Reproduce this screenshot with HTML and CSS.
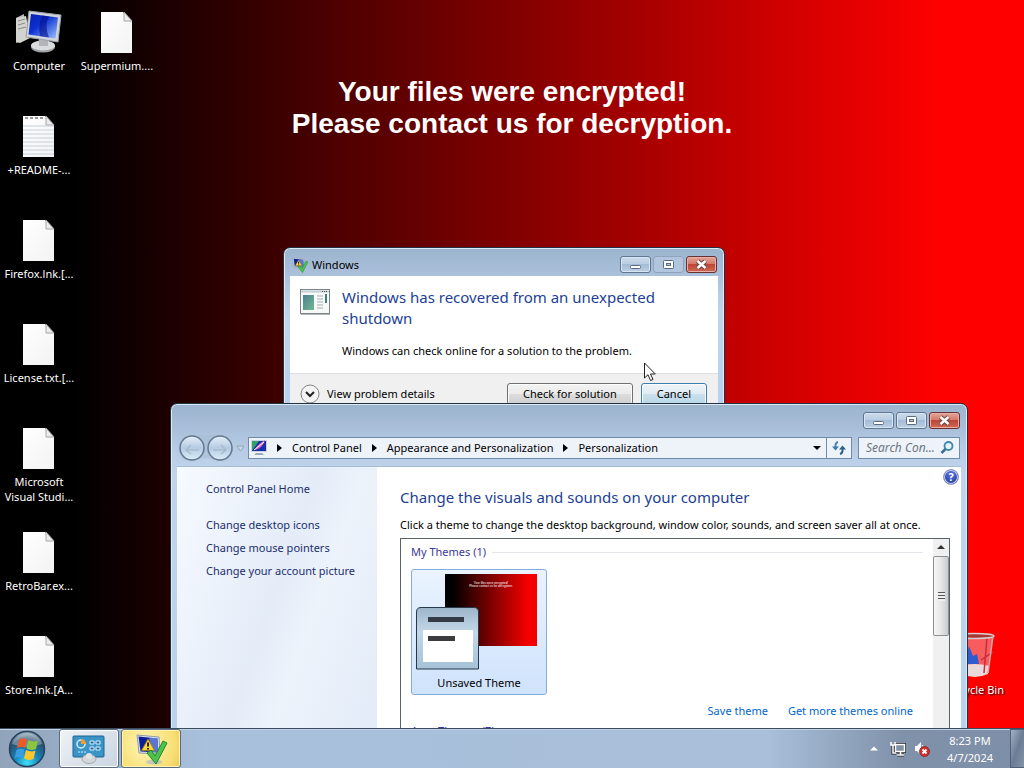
FILE: index.html
```html
<!DOCTYPE html>
<html lang="en">
<head>
    <meta charset="UTF-8">
    <meta name="viewport" content="width=device-width, initial-scale=1.0">
    <title>Desktop</title>
    <link rel="stylesheet" href="styles.css">
</head>
<body>

    <!-- shared icons -->
    <svg class="sprite" aria-hidden="true">
        <defs>
            <linearGradient id="paper" x1="0" y1="0" x2="1" y2="1">
                <stop offset="0" stop-color="#ffffff"/>
                <stop offset="1" stop-color="#f3f3f3"/>
            </linearGradient>
            <linearGradient id="screen" x1="0" y1="0" x2="1" y2="1">
                <stop offset="0" stop-color="#0a1fb0"/>
                <stop offset="0.4" stop-color="#0c2fd0"/>
                <stop offset="1" stop-color="#9cc4ff"/>
            </linearGradient>
            <linearGradient id="glassBtn" x1="0" y1="0" x2="0" y2="1">
                <stop offset="0" stop-color="#e6eff8"/>
                <stop offset="0.5" stop-color="#b4cbe2"/>
                <stop offset="1" stop-color="#dcecf9"/>
            </linearGradient>
            <symbol id="file" viewBox="0 0 48 48">
                <path d="M8 4H30L39 13V45H8Z" fill="url(#paper)"/>
                <path d="M31 4V13H39Z" fill="#ececec" stroke="#a5a5a5" stroke-width="1"/>
            </symbol>
            <symbol id="flag" viewBox="0 0 16 16">
                <rect x="0" y="0" width="16" height="12" rx="1" fill="#c9d3df"/>
                <rect x="1" y="1" width="14" height="10" fill="#1a2da8"/>
                <path d="M1 1H8L3 8L1 11Z" fill="#2fa36a"/>
                <path d="M4 10C5 6 9 3 14 0C13 5 9 9 4 10Z" fill="#c95fc0"/>
                <path d="M3 10L13 2" stroke="#fff" stroke-width="1"/>
                <path d="M5 13H11L13 15H3Z" fill="#9aa7b5"/>
            </symbol>
            <symbol id="solution" viewBox="0 0 32 32">
                <ellipse cx="19" cy="29" rx="8" ry="2.500" fill="#b9bfc6" opacity="0.8"/>
                <path d="M2 2L24 4L25 21L4 20Z" fill="#dfe5ee" stroke="#8e99a8"/>
                <path d="M3.500 3.500L22.500 5.500L23.500 19.500L5.500 18.500Z" fill="#0c1f96"/>
                <path d="M14 4.500L22.500 5.500L23.500 19.500L17 19Z" fill="#7f9ae8" opacity="0.7"/>
                <path d="M13 6L19.500 17.500H6.500Z" fill="#fbd53a" stroke="#a57a00" stroke-width="0.700"/>
                <path d="M13 9.500V13.500M13 15V16.500" stroke="#111" stroke-width="1.800"/>
                <path d="M12 20L16 17L20 23L28 8L32 10L21 31Z" fill="#4dc24d" stroke="#1f8a2c"/>
            </symbol>
            <symbol id="min" viewBox="0 0 29 15">
                <rect x="9.500" y="8.500" width="10" height="3" rx="1" fill="#fff" stroke="#5b6b80"/>
            </symbol>
            <symbol id="max" viewBox="0 0 29 15">
                <rect x="9.500" y="3.500" width="10" height="8" rx="1" fill="#fff" stroke="#5b6b80"/>
                <rect x="12.500" y="6.500" width="4" height="2" fill="#b5c8de" stroke="#5b6b80"/>
            </symbol>
            <symbol id="close" viewBox="0 0 29 15">
                <path d="M10.500 4L18.500 11M18.500 4L10.500 11" stroke="#6a4440" stroke-width="4.500"/>
                <path d="M10.500 4L18.500 11M18.500 4L10.500 11" stroke="#fff" stroke-width="2.500"/>
            </symbol>
        </defs>
    </svg>

    <main class="desktop">
        <h1 class="notice">Your files were encrypted!<br>Please contact us for decryption.</h1>

        <ul class="icons">
            <li class="icon">
                <svg class="icon-img" viewBox="0 0 48 48">
                    <path d="M1 10L9 6V32L1 35Z" fill="#b9bbb8"/>
                    <path d="M1 10L11 8L15 30L5 35L1 34Z" fill="#d3d3cf"/>
                    <path d="M3 13L10 11M3 17L10 15M3 21L11 19" stroke="#888" stroke-width="1"/>
                    <ellipse cx="28" cy="39" rx="12" ry="5.500" fill="#9da1a4"/>
                    <ellipse cx="28" cy="37.500" rx="12" ry="5" fill="#d9dcdd"/>
                    <path d="M24 30H33V38H24Z" fill="#b2b6b8"/>
                    <path d="M14 3L46 7L43 34L11 29Z" fill="#d0d4da" stroke="#9ba1a8"/>
                    <path d="M16 6L43 9.500L40.500 30.500L13.500 26.500Z" fill="url(#screen)"/>
                    <path d="M27 7.500L34 8.500Q29 17 34 29.500L25 28Q23 18 27 7.500Z" fill="#05108c" opacity="0.6"/>
                </svg>
                <span>Computer</span>
            </li>
            <li class="icon">
                <svg class="icon-img" viewBox="0 0 48 48">
                    <use href="#file"/>
                    <path d="M8 14H39M8 18H39M8 22H39M8 26H39M8 30H39M8 34H39M8 38H39M8 42H39" stroke="#c6d0de" stroke-width="1"/>
                    <path d="M10 6h3M15 6h3M20 6h3M25 6h3" stroke="#999" stroke-width="2"/>
                </svg>
                <span>+README-...</span>
            </li>
            <li class="icon">
                <svg class="icon-img"><use href="#file"/></svg>
                <span>Firefox.lnk.[...</span>
            </li>
            <li class="icon">
                <svg class="icon-img"><use href="#file"/></svg>
                <span>License.txt.[...</span>
            </li>
            <li class="icon">
                <svg class="icon-img"><use href="#file"/></svg>
                <span>Microsoft<br>Visual Studi...</span>
            </li>
            <li class="icon">
                <svg class="icon-img"><use href="#file"/></svg>
                <span>RetroBar.ex...</span>
            </li>
            <li class="icon">
                <svg class="icon-img"><use href="#file"/></svg>
                <span>Store.lnk.[A...</span>
            </li>
            <li class="icon">
                <svg class="icon-img"><use href="#file"/></svg>
                <span>Supermium....</span>
            </li>
            <li class="icon recycle">
                <svg class="icon-img" viewBox="0 0 48 48">
                    <path d="M4 3H42L37 41Q24 48 10 41Z" fill="#f4c9cf" opacity="0.45"/>
                    <path d="M9 34Q24 30 38 34L37 42Q24 48 10 42Z" fill="#e8eef0" opacity="0.85"/>
                    <path d="M14 32L18 14L22 24L26 22L28 32Z" fill="#2d5bd0"/>
                    <path d="M36 5L33 41M42 20L30 28" stroke="#c03040" stroke-width="1.500" fill="none"/>
                    <ellipse cx="23" cy="4" rx="20" ry="2.500" fill="#a33" stroke="#d6cfcf" stroke-width="1.500"/>
                    <path d="M42 4L37 41" stroke="#d7a7ab" stroke-width="1.500"/>
                </svg>
                <span>Recycle Bin</span>
            </li>
        </ul>

        <!-- shutdown dialog -->
        <section class="window dialog">
            <header class="titlebar">
                <svg class="title-icon"><use href="#solution"/></svg>
                <span class="title">Windows</span>
                <div class="controls">
                    <button type="button" aria-label="Minimize"><svg><use href="#min"/></svg></button>
                    <button type="button" class="dim" aria-label="Maximize"><svg><use href="#max"/></svg></button>
                    <button type="button" class="close" aria-label="Close"><svg><use href="#close"/></svg></button>
                </div>
            </header>
            <div class="client">
                <div class="dialog-body">
                    <svg class="dialog-icon" viewBox="0 0 30 26">
                        <defs>
                            <linearGradient id="app" x1="0" y1="0" x2="1" y2="1">
                                <stop offset="0" stop-color="#4f7f8c"/>
                                <stop offset="1" stop-color="#6fb893"/>
                            </linearGradient>
                        </defs>
                        <rect x="0.500" y="0.500" width="29" height="24" fill="#f7f8f8" stroke="#7d8488"/>
                        <path d="M1 2.500H29" stroke="#c5ced2" stroke-width="2"/>
                        <path d="M22 2.500H28" stroke="#555" stroke-dasharray="1 1"/>
                        <rect x="3" y="6" width="11" height="15" fill="url(#app)"/>
                        <path d="M17 7H23M17 10H23M17 13H23M17 16H23M17 19H23" stroke="#a9adb0"/>
                        <rect x="25" y="5" width="2" height="9" fill="#3f7f74"/>
                        <path d="M1 25.500H30" stroke="#b5b5b5"/>
                    </svg>
                    <div>
                        <h2>Windows has recovered from an unexpected shutdown</h2>
                        <p>Windows can check online for a solution to the problem.</p>
                    </div>
                </div>
                <footer class="dialog-footer">
                    <button type="button" class="expander">
                        <svg viewBox="0 0 20 20">
                            <circle cx="10" cy="10" r="9" fill="#f4f4f4" stroke="#868686"/>
                            <path d="M6 8L10 12L14 8" fill="none" stroke="#222" stroke-width="2"/>
                        </svg>
                        View problem details
                    </button>
                    <button type="button" class="push">Check for solution</button>
                    <button type="button" class="push hot">Cancel</button>
                </footer>
            </div>
        </section>

        <svg class="cursor" viewBox="0 0 12 20">
            <path d="M0.500 1V16L4 12.700L6.500 18.500L9 17.500L6.500 12H11.300Z" fill="#fff" stroke="#222"/>
        </svg>

        <!-- personalization window -->
        <section class="window explorer">
            <header class="titlebar">
                <div class="controls">
                    <button type="button" aria-label="Minimize"><svg><use href="#min"/></svg></button>
                    <button type="button" aria-label="Maximize"><svg><use href="#max"/></svg></button>
                    <button type="button" class="close" aria-label="Close"><svg><use href="#close"/></svg></button>
                </div>
            </header>
            <nav class="toolbar">
                <svg class="travel" viewBox="0 0 68 28">
                    <path d="M14 1H41Q54 1 54 14Q54 27 41 27Q31 24 28 24Q24 24 14 27Q1 27 1 14Q1 1 14 1Z" fill="#a9bdd2" opacity="0.6"/>
                    <circle cx="14" cy="14" r="12" fill="url(#glassBtn)" stroke="#64788f" stroke-width="1.500"/>
                    <circle cx="42" cy="14" r="12" fill="url(#glassBtn)" stroke="#64788f" stroke-width="1.500"/>
                    <path d="M21 16H9M13 11L8 16L13 20" fill="none" stroke="#a8bace" stroke-width="1.500"/>
                    <path d="M35 16H47M43 11L48 16L43 20" fill="none" stroke="#a8bace" stroke-width="1.500"/>
                    <path d="M59 12H66L62.500 17Z" fill="#c9daec" stroke="#92a7c0"/>
                </svg>
                <div class="address">
                    <svg class="title-icon"><use href="#flag"/></svg>
                    <svg class="arrow" viewBox="0 0 5 8"><path d="M0 0L5 4L0 8Z"/></svg>
                    <a href="#">Control Panel</a>
                    <svg class="arrow" viewBox="0 0 5 8"><path d="M0 0L5 4L0 8Z"/></svg>
                    <a href="#">Appearance and Personalization</a>
                    <svg class="arrow" viewBox="0 0 5 8"><path d="M0 0L5 4L0 8Z"/></svg>
                    <a href="#">Personalization</a>
                    <button type="button" class="drop" aria-label="Previous locations">
                        <svg viewBox="0 0 8 4"><path d="M0 0H8L4 4Z"/></svg>
                    </button>
                    <button type="button" class="refresh" aria-label="Refresh">
                        <svg viewBox="0 0 14 14">
                            <path d="M6 1Q3 2 3.500 6" fill="none" stroke="#4a86b0" stroke-width="2"/>
                            <path d="M0 5.500H7L3.500 9.500Z" fill="#3c7ba8"/>
                            <path d="M8 13Q11 12 10.500 8" fill="none" stroke="#2a5f90" stroke-width="2"/>
                            <path d="M7 8.500H14L10.500 4.500Z" fill="#2a5f90"/>
                        </svg>
                    </button>
                </div>
                <div class="search">
                    <input type="text" placeholder="Search Con..." aria-label="Search Control Panel">
                    <svg viewBox="0 0 14 14">
                        <circle cx="8.500" cy="5" r="4" fill="#e4f2fb" stroke="#3b86b5" stroke-width="1.800"/>
                        <path d="M5.500 8L1.500 12" stroke="#3a6f96" stroke-width="2.500"/>
                    </svg>
                </div>
            </nav>
            <div class="client panel">
                <aside class="sidebar">
                    <a href="#" class="home">Control Panel Home</a>
                    <a href="#">Change desktop icons</a>
                    <a href="#">Change mouse pointers</a>
                    <a href="#">Change your account picture</a>
                </aside>
                <div class="content">
                    <button type="button" class="help" aria-label="Help">?</button>
                    <h2>Change the visuals and sounds on your computer</h2>
                    <p>Click a theme to change the desktop background, window color, sounds, and screen saver all at once.</p>
                    <div class="themes">
                        <div class="theme-list">
                            <h3>My Themes (1)</h3>
                            <button type="button" class="theme">
                                <svg viewBox="0 0 124 100">
                                    <defs>
                                        <linearGradient id="wall">
                                            <stop offset="0.080" stop-color="#000"/>
                                            <stop offset="0.900" stop-color="#f50000"/>
                                        </linearGradient>
                                        <linearGradient id="aero" x1="0" y1="0" x2="0" y2="1">
                                            <stop offset="0" stop-color="#9db5ca"/>
                                            <stop offset="0.400" stop-color="#c3d7e8"/>
                                            <stop offset="1" stop-color="#a5c2d8"/>
                                        </linearGradient>
                                    </defs>
                                    <rect x="29" y="1" width="92" height="72" fill="url(#wall)"/>
                                    <text class="mini" x="75" y="11">Your files were encrypted!</text>
                                    <text class="mini" x="75" y="14">Please contact us for decryption.</text>
                                    <path d="M0.500 96V39Q0.500 34.500 5 34.500H58Q62.500 34.500 62.500 39V96Z" fill="url(#aero)" stroke="#26384a"/>
                                    <rect x="7" y="57" width="50" height="32" fill="#fff"/>
                                    <rect x="12" y="44" width="36" height="5" fill="#333b46"/>
                                    <rect x="12" y="63" width="27" height="5" fill="#3c3c3e"/>
                                </svg>
                                Unsaved Theme
                            </button>
                            <div class="theme-links">
                                <a href="#">Save theme</a>
                                <a href="#">Get more themes online</a>
                            </div>
                            <h3>Aero Themes (7)</h3>
                        </div>
                        <div class="scrollbar">
                            <svg class="up" viewBox="0 0 16 17"><path d="M4 10H12L8 6Z" fill="#333"/></svg>
                            <div class="thumb"></div>
                        </div>
                    </div>
                </div>
            </div>
        </section>
    </main>

    <footer class="taskbar">
        <button type="button" class="start" aria-label="Start">
            <svg viewBox="0 0 38 38">
                <defs>
                    <radialGradient id="orb" cx="0.5" cy="0.9" r="0.9">
                        <stop offset="0" stop-color="#3fe0f5"/>
                        <stop offset="0.400" stop-color="#1582b8"/>
                        <stop offset="0.750" stop-color="#29506f"/>
                        <stop offset="1" stop-color="#a5b8c6"/>
                    </radialGradient>
                </defs>
                <circle cx="19" cy="19" r="17.500" fill="url(#orb)" stroke="#27435c" stroke-width="1.500"/>
                <path d="M4 14Q8 4 19 3Q30 4 34 14Q19 20 4 14Z" fill="#fff" opacity="0.3"/>
                <path d="M11 10Q15 7 19 9.500L17 18Q13 16 9 18.500Z" fill="#ee5a24"/>
                <path d="M20.500 10Q25 12.500 30 10.500L28 19Q23 21 18.500 18.500Z" fill="#8cc63e"/>
                <path d="M8.500 20Q12.500 17.500 16.500 19.500L14.500 28Q10.500 26 6.500 28.500Z" fill="#3a9de0"/>
                <path d="M18 20Q23 22.500 27.500 20.500L25.500 29Q20.500 31 16 28.500Z" fill="#fdc62e"/>
            </svg>
        </button>
        <button type="button" class="task" aria-label="Personalization">
            <svg viewBox="0 0 34 32">
                <rect x="1" y="3" width="31" height="21" rx="1" fill="#3b94c8" stroke="#1f628f"/>
                <circle cx="9" cy="11" r="4" fill="none" stroke="#d9f0fb" stroke-width="1.500"/>
                <path d="M9 11V6A5 5 0 0 1 14 11Z" fill="#f59a2c"/>
                <path d="M18 8H22V11H18ZM24 8H28V11H24ZM18 14H22V17H18ZM24 14H28V17H24Z" fill="#1f6c9e" stroke="#d9f0fb"/>
                <path d="M6 19H14" stroke="#d9f0fb" stroke-dasharray="2 1"/>
                <ellipse cx="17" cy="26" rx="7" ry="4.500" fill="#d3d7da" stroke="#a2a8ad"/>
                <circle cx="17" cy="23" r="3" fill="#e2e5e7"/>
            </svg>
        </button>
        <button type="button" class="task alert" aria-label="Windows">
            <svg><use href="#solution"/></svg>
        </button>
        <div class="tray">
            <svg class="tray-up" viewBox="0 0 8 5"><path d="M0 4.500L4 0.500L8 4.500Z" fill="#fff"/></svg>
            <svg class="tray-icon" viewBox="0 0 16 16">
                <rect x="5.500" y="3.500" width="9" height="7" fill="#7f91aa" stroke="#222" stroke-width="3"/>
                <path d="M7 14H14M3 4V12H6" fill="none" stroke="#222" stroke-width="3"/>
                <rect x="5.500" y="3.500" width="9" height="7" fill="#7f91aa" stroke="#fff" stroke-width="1.500"/>
                <path d="M7 14H14M10.500 11V14" stroke="#fff" stroke-width="1.500"/>
                <path d="M1 1V4H5V1M3 4V12H6" fill="none" stroke="#fff" stroke-width="1.500"/>
            </svg>
            <svg class="tray-icon" viewBox="0 0 16 16">
                <path d="M1 5H3L7 1V14L3 10H1Z" fill="#fff"/>
                <path d="M8.500 4Q10 7 8.500 10" fill="none" stroke="#fff"/>
                <circle cx="10.500" cy="10.500" r="5" fill="#d22f2f" stroke="#8c2020" stroke-width="0.800"/>
                <path d="M8.500 8.500L12.500 12.500M12.500 8.500L8.500 12.500" stroke="#fff" stroke-width="1.800"/>
            </svg>
            <div class="clock">
                <time>8:23 PM</time>
                <time>4/7/2024</time>
            </div>
            <button type="button" class="show-desktop" aria-label="Show desktop"></button>
        </div>
    </footer>

</body>
</html>
```
FILE: styles.css
```css
*{
    margin: 0;
    padding: 0;
    box-sizing: border-box;
}
body{
    height: 100vh;
    display: flex;
    flex-direction: column;
    overflow: hidden;
    font-family: "Noto Sans", "Open Sans", sans-serif;
    font-size: 11px;
    line-height: 16px;
    color: #000;
}
button,input{
    font: inherit;
    color: inherit;
}
button{
    border: none;
    background: none;
}
a{
    color: inherit;
    text-decoration: none;
}
svg{
    display: block;
    flex: none;
}
.sprite{
    position: absolute;
    width: 0;
    height: 0;
}

/* desktop */
.desktop{
    position: relative;
    flex: 1;
    min-height: 0;
    overflow: hidden;
    background: linear-gradient(to right, #000 7%, #ff0000 92%);
}
.notice{
    position: absolute;
    top: 76px;
    left: 0;
    right: 0;
    text-align: center;
    font-family: "Liberation Sans", Arial, sans-serif;
    font-size: 28px;
    line-height: 32px;
    font-weight: bold;
    color: #fff;
}
.icons{
    display: grid;
    grid-template-columns: repeat(auto-fill, 78px);
    grid-template-rows: repeat(7, 104px);
    grid-auto-flow: column;
    list-style: none;
}
.icon{
    display: flex;
    flex-direction: column;
    align-items: center;
    gap: 2px;
    padding-top: 8px;
    line-height: 15px;
    text-align: center;
    white-space: nowrap;
    color: #fff;
    text-shadow: 1px 1px 2px #000;
}
.icon-img{
    width: 48px;
    height: 48px;
}
.recycle{
    grid-column: -2 / -1;
    grid-row: 7;
}

/* windows */
.window{
    position: absolute;
    display: flex;
    flex-direction: column;
    padding: 0 6px 6px;
    border: 1px solid #22303f;
    border-radius: 7px 7px 0 0;
    background: linear-gradient(to bottom, #9bb3cd 0, #b9cde6 50px, #c0d4ec 70px, #b4d2ee 100%);
    box-shadow: inset 0 0 0 1px #dcebf8;
}
.titlebar{
    display: flex;
    align-items: center;
    gap: 4px;
}
.title-icon{
    width: 16px;
    height: 16px;
}
.title{
    flex: 1;
}
.controls{
    display: flex;
    gap: 2px;
    margin-left: auto;
}
.controls button{
    width: 31px;
    height: 17px;
    border: 1px solid #5f7590;
    border-radius: 3px;
    background: linear-gradient(to bottom, #cbdaea, #b9cce2 50%, #a5bcd6 50%, #bccfe5);
    box-shadow: inset 0 0 0 1px #d8e5f2;
}
.controls svg{
    width: 29px;
    height: 15px;
}
.controls .dim{
    border-color: #8fa3bc;
    background: #b1c5df;
    box-shadow: none;
}
.controls .close{
    border-color: #69302f;
    background: linear-gradient(to bottom, #e3a69a, #d27565 50%, #bd4636 50%, #cf6a55);
    box-shadow: inset 0 0 0 1px #e5b0a8;
}
.client{
    flex: 1;
    background: #fff;
}

.dialog{
    top: 247px;
    left: 283px;
    width: 442px;
}
.dialog .titlebar{
    height: 28px;
    padding: 5px 1px 0 2px;
}
.dialog-body{
    display: flex;
    gap: 12px;
    padding: 11px 10px 14px;
}
.dialog-icon{
    width: 30px;
    height: 26px;
    margin-top: 2px;
}
h2{
    font-size: 15px;
    line-height: 21px;
    font-weight: normal;
    color: #1c3f95;
}
.dialog-body p{
    margin-top: 14px;
}
.dialog-footer{
    display: flex;
    align-items: center;
    gap: 8px;
    height: 40px;
    padding: 0 11px 0 10px;
    border-top: 1px solid #dfdfdf;
    background: #f0f0f0;
}
.expander{
    display: flex;
    align-items: center;
    gap: 7px;
    margin-right: auto;
}
.expander svg{
    width: 20px;
    height: 20px;
}
.push{
    min-width: 66px;
    height: 22px;
    padding: 0 15px;
    border: 1px solid #707070;
    border-radius: 3px;
    background: linear-gradient(to bottom, #f2f2f2, #ebebeb 50%, #dddddd 50%, #cfcfcf);
    box-shadow: inset 0 0 0 1px #fcfcfc;
}
.hot{
    border-color: #3c7fb1;
    background: linear-gradient(to bottom, #eef5f9, #dfebf2 50%, #cbe0ec 50%, #b9d7e8);
}
.cursor{
    position: absolute;
    top: 362px;
    left: 644px;
    width: 12px;
    height: 20px;
}

.explorer{
    top: 403px;
    left: 170px;
    width: 798px;
    height: 400px;
}
.explorer .titlebar{
    height: 25px;
    padding: 8px 1px 0;
}
.toolbar{
    display: flex;
    align-items: center;
    height: 37px;
    padding: 0 1px;
}
.travel{
    width: 68px;
    height: 28px;
    margin-right: 2px;
}
.address,.search{
    display: flex;
    align-items: center;
    height: 22px;
    border: 1px solid #6f8cab;
    background: #eef3fa;
}
.address{
    flex: 1;
    gap: 10px;
    padding-left: 2px;
}
.arrow{
    width: 5px;
    height: 8px;
}
.drop{
    margin-left: auto;
}
.drop svg{
    width: 8px;
    height: 4px;
}
.refresh{
    width: 25px;
    height: 20px;
    margin-left: -5px;
    padding-left: 5px;
    border-left: 1px solid #6f8cab;
}
.refresh svg{
    width: 14px;
    height: 14px;
}
.search{
    width: 102px;
    margin-left: 6px;
    padding: 0 5px 0 7px;
}
.search input{
    flex: 1;
    min-width: 0;
    border: none;
    background: none;
    font-size: 12px;
    font-style: italic;
}
.search input::placeholder{
    color: #6d7580;
}
.search svg{
    width: 14px;
    height: 14px;
}
.panel{
    display: flex;
    border-top: 1px solid #a5bcd6;
}
.sidebar{
    flex: none;
    display: flex;
    flex-direction: column;
    gap: 7px;
    width: 200px;
    padding: 14px 8px 0 29px;
    background: linear-gradient(110deg, #f7faff, #e4ecf8 45%, #edf3fb 60%, #dfe9f7);
    color: #1b2f6b;
}
.sidebar .home{
    margin-bottom: 13px;
}
.content{
    position: relative;
    flex: 1;
    min-width: 0;
    display: flex;
    flex-direction: column;
    padding: 20px 11px 0 23px;
}
.content p{
    margin: 9px 0 5px;
    white-space: nowrap;
}
.help{
    position: absolute;
    top: 2px;
    right: 2px;
    width: 16px;
    height: 16px;
    border: 1px solid #8f9bc0;
    border-radius: 50%;
    background: radial-gradient(circle at 50% 30%, #5a75dd, #1c2f95);
    box-shadow: inset 0 0 0 1px #c9d2ee;
    font-weight: bold;
    line-height: 14px;
    color: #fff;
}
.themes{
    flex: 1;
    display: flex;
    border: 1px solid #596169;
    border-bottom: none;
}
.theme-list{
    flex: 1;
    padding: 5px 10px 0;
}
h3{
    display: flex;
    align-items: center;
    gap: 6px;
    font-size: 11px;
    font-weight: normal;
    color: #39399b;
}
h3::after{
    content: "";
    flex: 1;
    height: 1px;
    background: #e2e5ea;
}
.theme{
    width: 136px;
    height: 126px;
    margin-top: 9px;
    padding: 2px 4px;
    border: 1px solid #84acdd;
    border-radius: 3px;
    background: linear-gradient(to bottom, #eaf3fe, #cfe3fc);
}
.theme svg{
    width: 124px;
    height: 100px;
    margin-bottom: 2px;
}
.mini{
    font-family: "Liberation Sans", Arial, sans-serif;
    font-size: 3px;
    text-anchor: middle;
    fill: #fff;
}
.theme-links{
    display: flex;
    justify-content: flex-end;
    gap: 20px;
    margin: 8px 10px 4px 0;
    color: #0066cc;
}
.scrollbar{
    width: 16px;
    background: #f0f0f0;
}
.up{
    width: 16px;
    height: 17px;
}
.thumb{
    height: 80px;
    border: 1px solid #8b8f94;
    border-radius: 2px;
    background:
        repeating-linear-gradient(to bottom, #555 0 1px, #eee 1px 3px) center / 7px 9px no-repeat,
        linear-gradient(to right, #f5f5f5, #e6e6e6 50%, #c9cbce);
}

/* taskbar */
.taskbar{
    display: flex;
    align-items: stretch;
    height: 40px;
    padding-left: 8px;
    border-top: 1px solid #3c4c60;
    background: linear-gradient(to right, #90a3ba, #a8c0dc 20%, #a9bfda 75%, #8092aa 88%, #7d8fa8);
    box-shadow: inset 0 1px 0 #c3d3e6;
}
.start{
    width: 38px;
    margin-right: 13px;
}
.start svg{
    width: 38px;
    height: 38px;
}
.task{
    display: flex;
    align-items: center;
    justify-content: center;
    width: 60px;
    margin-right: 2px;
    border: 1px solid #5a6a7e;
    border-radius: 3px;
    background: linear-gradient(135deg, #eef2f6, #c9d5e2);
    box-shadow: inset 0 0 0 1px #fff;
}
.task svg{
    width: 34px;
    height: 32px;
}
.alert{
    background: radial-gradient(circle at 40% 40%, #fff6b8, #f8df75 70%, #ecc95c);
    box-shadow: inset 0 0 0 1px #fff3b0;
}
.tray{
    display: flex;
    align-items: center;
    gap: 8px;
    margin-left: auto;
}
.tray-up{
    width: 8px;
    height: 5px;
    margin-right: 4px;
}
.tray-icon{
    width: 16px;
    height: 16px;
}
.clock{
    display: flex;
    flex-direction: column;
    width: 64px;
    padding-top: 1px;
    line-height: 17px;
    text-align: center;
    color: #fff;
}
.show-desktop{
    align-self: stretch;
    width: 14px;
    border: 1px solid #4f6078;
    border-right: none;
    background: linear-gradient(110deg, #a3b1c4, #6b7c95 50%, #8494aa);
}
```
